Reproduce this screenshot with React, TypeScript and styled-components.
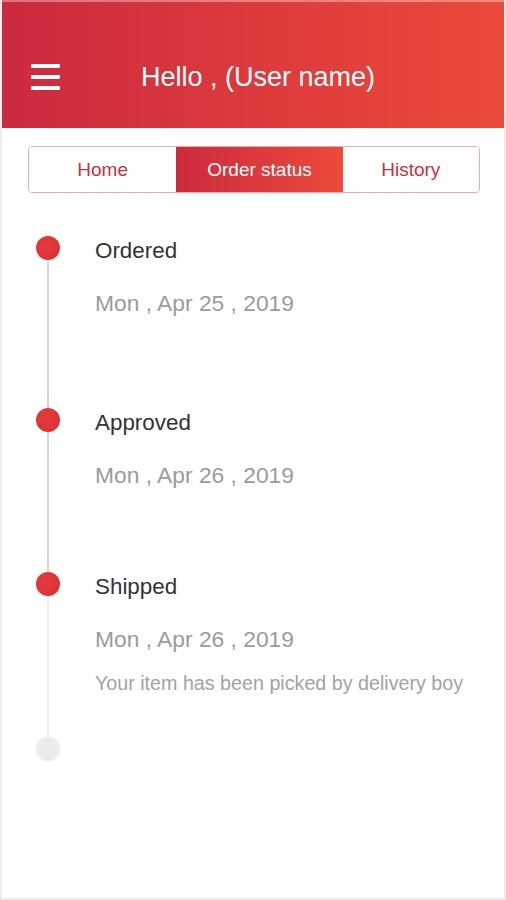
import React from 'react';
import styled, { createGlobalStyle } from 'styled-components';

const GlobalStyle = createGlobalStyle`
    html, body {
        margin: 0;
        padding: 0;
        background: #ffffff;
    }
    * {
        box-sizing: border-box;
    }
`;

const Screen = styled.div`
    display: flex;
    flex-direction: column;
    width: 506px;
    height: 900px;
    background: #ffffff;
    border: 2px solid #ececec;
    border-top: none;
    font-family: 'Liberation Sans', Arial, sans-serif;
    overflow: hidden;
`;

const Header = styled.header`
    display: flex;
    align-items: center;
    height: 128px;
    margin: 0 -2px;
    padding: 24px 0 0 29px;
    background: linear-gradient(90deg, #ca2a3e 0%, #dd3a3d 50%, #ec4a3a 100%);
    border-top: 2px solid rgba(255, 255, 255, 0.35);
    border-left: 2px solid rgba(255, 255, 255, 0.3);
    border-right: 2px solid rgba(255, 255, 255, 0.3);
`;

const MenuButton = styled.div`
    display: flex;
    flex-direction: column;
    gap: 7px;
    width: 29px;
`;

const MenuBar = styled.span`
    display: block;
    height: 4px;
    background: #ffffff;
    border-radius: 1px;
`;

const Title = styled.h1`
    margin: 0 0 0 81px;
    font-size: 27px;
    font-weight: 400;
    color: #ffffff;
    white-space: nowrap;
`;

const Tabs = styled.nav`
    display: flex;
    height: 47px;
    margin: 18px 24px 0 26px;
    border: 1px solid #f2a8b0;
    border-radius: 4px;
    overflow: hidden;
`;

const Tab = styled.div<{ $active?: boolean; $width: number }>`
    display: flex;
    align-items: center;
    justify-content: center;
    width: ${props => props.$width}px;
    font-size: 19px;
    color: ${props => (props.$active ? '#ffffff' : '#c9303f')};
    background: ${props =>
        props.$active ? 'linear-gradient(90deg, #cc2a3e 0%, #ec4a3a 100%)' : '#ffffff'};
`;

const Timeline = styled.div`
    display: flex;
    flex-direction: column;
    margin-top: 43px;
    padding-left: 34px;
`;

const Step = styled.div<{ $height: number }>`
    display: flex;
    min-height: ${props => props.$height}px;
`;

const Rail = styled.div`
    display: flex;
    flex-direction: column;
    align-items: center;
    width: 24px;
    flex-shrink: 0;
`;

const Dot = styled.span<{ $done?: boolean }>`
    display: block;
    width: 24px;
    height: 24px;
    border-radius: 50%;
    background: ${props =>
        props.$done ? 'radial-gradient(circle at 40% 40%, #e43b3e 0%, #dc2d33 100%)' : '#ececec'};
`;

const Connector = styled.span<{ $color: string }>`
    display: block;
    flex: 1;
    width: 2px;
    background: ${props => props.$color};
`;

const Content = styled.div`
    display: flex;
    flex-direction: column;
    padding-left: 35px;
`;

const StepTitle = styled.div`
    font-size: 22.4px;
    line-height: 28px;
    margin-top: 1px;
    color: #333333;
`;

const StepDate = styled.div`
    margin-top: 24px;
    font-size: 22.8px;
    line-height: 28px;
    color: #9b9b9b;
`;

const StepNote = styled.div`
    margin-top: 18px;
    font-size: 19.7px;
    line-height: 24px;
    color: #a3a3a3;
    white-space: nowrap;
`;

const steps = [
    { title: 'Ordered', date: 'Mon , Apr 25 , 2019', height: 172, line: '#d6d6d6' },
    { title: 'Approved', date: 'Mon , Apr 26 , 2019', height: 164, line: '#d6d6d6' },
    {
        title: 'Shipped',
        date: 'Mon , Apr 26 , 2019',
        note: 'Your item has been picked by delivery boy',
        height: 165,
        line: '#f0f0f0',
    },
];

const App: React.FunctionComponent = () => (
    <Screen>
        <GlobalStyle />
        <Header>
            <MenuButton>
                <MenuBar />
                <MenuBar />
                <MenuBar />
            </MenuButton>
            <Title>Hello , (User name)</Title>
        </Header>
        <Tabs>
            <Tab $width={148}>Home</Tab>
            <Tab $width={167} $active>
                Order status
            </Tab>
            <Tab $width={137}>History</Tab>
        </Tabs>
        <Timeline>
            {steps.map(step => (
                <Step key={step.title} $height={step.height}>
                    <Rail>
                        <Dot $done />
                        <Connector $color={step.line} />
                    </Rail>
                    <Content>
                        <StepTitle>{step.title}</StepTitle>
                        <StepDate>{step.date}</StepDate>
                        {step.note && <StepNote>{step.note}</StepNote>}
                    </Content>
                </Step>
            ))}
            <Step $height={24}>
                <Rail>
                    <Dot />
                </Rail>
            </Step>
        </Timeline>
    </Screen>
);

export default App;
